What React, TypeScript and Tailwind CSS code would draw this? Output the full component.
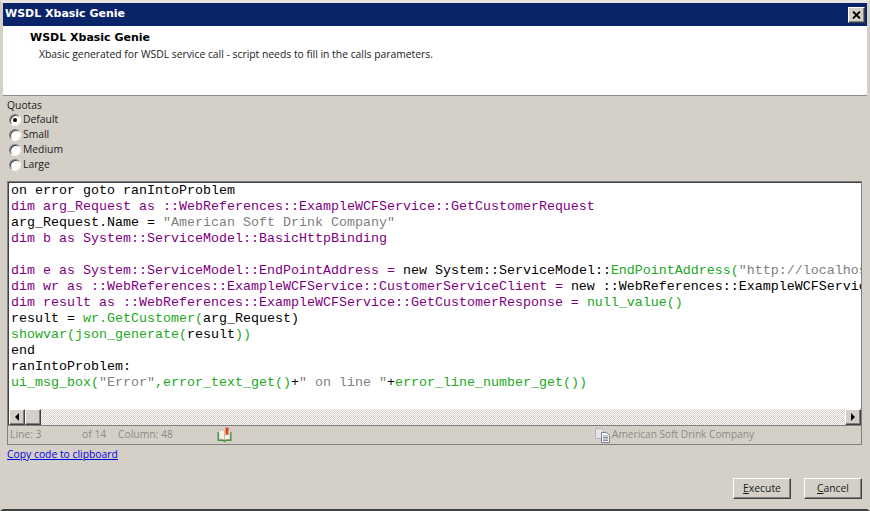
import React from "react";

type Seg = [string, string];

const P = "text-[#800080]";
const K = "text-black";
const G = "text-[#808080]";
const N = "text-[#22a822]";

const lines: Seg[][] = [
  [["on error goto ranIntoProblem", K]],
  [["dim arg_Request as ::WebReferences::ExampleWCFService::GetCustomerRequest", P]],
  [["arg_Request.Name = ", K], ['"American Soft Drink Company"', G]],
  [["dim b as System::ServiceModel::BasicHttpBinding", P]],
  [],
  [
    ["dim e as System::ServiceModel::EndPointAddress = ", P],
    ["new System::ServiceModel::", K],
    ["EndPointAddress(", N],
    ['"http://localhost:8080/ExampleWCFService"', G],
  ],
  [
    ["dim wr as ::WebReferences::ExampleWCFService::CustomerServiceClient = ", P],
    ["new ::WebReferences::ExampleWCFService::CustomerServiceClient", K],
  ],
  [
    ["dim result as ::WebReferences::ExampleWCFService::GetCustomerResponse = ", P],
    ["null_value()", N],
  ],
  [["result = ", K], ["wr.GetCustomer(", N], ["arg_Request)", K]],
  [["showvar(json_generate(", N], ["result", K], ["))", N]],
  [["end", K]],
  [["ranIntoProblem:", K]],
  [
    ["ui_msg_box(", N],
    ['"Error"', G],
    [",error_text_get()", N],
    ["+", K],
    ['" on line "', G],
    ["+", K],
    ["error_line_number_get())", N],
  ],
];

const raised =
  "border border-t-white border-l-white border-r-[#404040] border-b-[#404040] shadow-[inset_-1px_-1px_0_#808080]";

function Radio({ label, checked }: { label: string; checked?: boolean }) {
  return (
    <label className="flex h-[15px] items-center">
      <span className="ml-[6px] mr-[2px] flex h-[12px] w-[12px] items-center justify-center rounded-full border border-t-[#808080] border-l-[#808080] border-r-[#f4f4f4] border-b-[#f4f4f4] bg-white shadow-[inset_1px_1px_0_#404040]">
        {checked && <span className="h-[4px] w-[4px] rounded-full bg-black" />}
      </span>
      <span>{label}</span>
    </label>
  );
}

function BookIcon() {
  return (
    <svg width="15" height="16" viewBox="0 0 15 16">
      <path d="M0.500 5h14v9H9l-1.500 1.500L6 14H0.500z" fill="#3f8f45" />
      <path d="M2 3.500c2-.7 4-.5 5.500.6v9c-1.500-1-3.500-1.200-5.500-.6zM13 3.500c-2-.7-4-.5-5.500.6v9c1.500-1 3.500-1.200 5.500-.6z" fill="#f4f2e6" stroke="#a9ac96" strokeWidth=".5" />
      <path d="M8.500 0.500h3v8l-1.500-1.300-1.500 1.300z" fill="#e2431c" />
    </svg>
  );
}

function PagesIcon() {
  return (
    <svg width="17" height="16" viewBox="0 0 17 16">
      <path d="M1.500 1.500h6l2 2v8h-8z" fill="#e4e4e8" stroke="#b4b6be" />
      <path d="M7.500 5.500h5l3 3v7h-8z" fill="#fafafa" stroke="#7d8190" />
      <path d="M9 9h5M9 10.500h5M9 12h5M9 13.500h5" stroke="#6f7484" strokeWidth=".8" />
    </svg>
  );
}

export default function App() {
  return (
    <div className="flex h-[511px] w-[870px] flex-col overflow-hidden border-x-[3px] border-t-[3px] border-b-2 border-x-[#d4d0c8] border-t-[#e8e6e1] border-b-[#404040] bg-[#d4d0c8] font-['Open_Sans','Noto_Sans',sans-serif] text-[10.350px] text-[#1a1a1a]">
      {/* Title bar */}
      <div className="flex h-[23px] shrink-0 items-center justify-between bg-[#0a246a] pl-[2px] pr-[2px] font-['DejaVu_Sans',sans-serif] text-[11px] font-bold text-white">
        <span>WSDL Xbasic Genie</span>
        <button className={`flex h-[16px] w-[17px] items-center justify-center bg-[#d4d0c8] ${raised}`}>
          <svg width="9" height="8" viewBox="0 0 9 8">
            <path d="M1 0.500l7 7M8 0.500l-7 7" stroke="#000" strokeWidth="1.800" />
          </svg>
        </button>
      </div>

      {/* Header */}
      <div className="h-[70px] shrink-0 border-b border-b-[#8c8c8c] bg-white">
        <div className="pl-[27px] pt-[5px] font-['DejaVu_Sans',sans-serif] text-[11px] font-bold leading-[14px] text-black">
          WSDL Xbasic Genie
        </div>
        <div className="pl-[36px] pt-[2px] leading-[15px]">
          Xbasic generated for WSDL service call - script needs to fill in the calls parameters.
        </div>
      </div>

      {/* Quotas */}
      <div className="pl-[4px] pt-[2px] leading-[14px]">Quotas</div>
      <div className="flex flex-col">
        <Radio label="Default" checked />
        <Radio label="Small" />
        <Radio label="Medium" />
        <Radio label="Large" />
      </div>

      {/* Editor */}
      <div className="ml-[4px] mr-[5px] mt-[9px] flex h-[264px] shrink-0 flex-col border border-[#808080]">
        <div className="flex min-h-0 flex-1 flex-col border-l border-t border-[#404040]">
          <div className="min-h-0 flex-1 overflow-hidden bg-white pl-[2px] font-['Liberation_Mono',monospace] text-[13.330px] leading-[16px]">
            {lines.map((segs, i) => (
              <div key={i} className="h-[16px] whitespace-pre">
                {segs.map(([t, c], j) => (
                  <span key={j} className={c}>
                    {t}
                  </span>
                ))}
              </div>
            ))}
          </div>
          <div className="flex h-[16px] shrink-0 bg-[repeating-conic-gradient(#d4d0c8_0_25%,#ffffff_0_50%)] bg-[length:2px_2px]">
            <div className={`flex w-[16px] items-center justify-center bg-[#d4d0c8] ${raised}`}>
              <span className="h-0 w-0 border-y-[4px] border-r-[4px] border-y-transparent border-r-black" />
            </div>
            <div className={`w-[16px] bg-[#d4d0c8] ${raised}`} />
            <div className="flex-1" />
            <div className={`flex w-[16px] items-center justify-center bg-[#d4d0c8] ${raised}`}>
              <span className="h-0 w-0 border-y-[4px] border-l-[4px] border-y-transparent border-l-black" />
            </div>
          </div>
        </div>
        {/* Status */}
        <div className="flex h-[19px] shrink-0 items-center border-t border-[#808080] pb-[1px] text-[#8a8a8a]">
          <span className="ml-[2px] w-[72px]">Line: 3</span>
          <span className="w-[36px]">of 14</span>
          <span className="w-[99px]">Column: 48</span>
          <BookIcon />
          <span className="flex-1" />
          <span className="mr-[107px] flex items-center">
            <PagesIcon />
            <span className="ml-[1px] text-[10.150px]">American Soft Drink Company</span>
          </span>
        </div>
      </div>

      <a className="ml-[4px] mt-[2px] leading-[15px] text-[#0000e0] underline">Copy code to clipboard</a>

      {/* Buttons */}
      <div className="mr-[5px] mt-auto mb-[10px] flex justify-end gap-[13px]">
        <button className={`h-[21px] w-[58px] bg-[#d4d0c8] text-center leading-[17px] ${raised}`}>
          <span className="underline">E</span>xecute
        </button>
        <button className={`h-[21px] w-[58px] bg-[#d4d0c8] text-center leading-[17px] ${raised}`}>
          <span className="underline">C</span>ancel
        </button>
      </div>
    </div>
  );
}
